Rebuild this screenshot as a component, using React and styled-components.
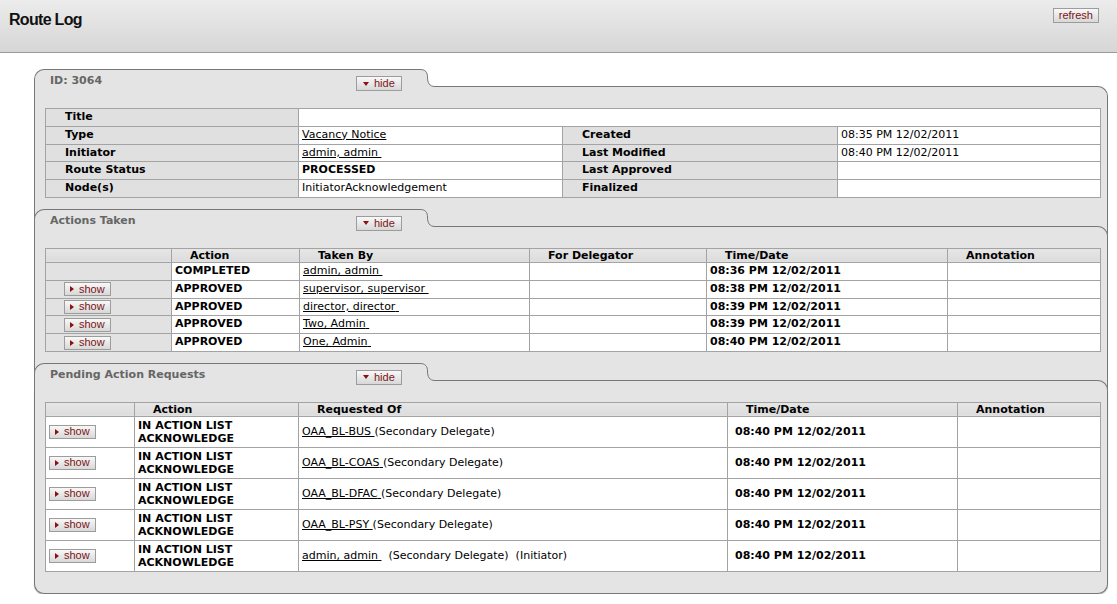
import styled, { createGlobalStyle } from 'styled-components';

const actionsTaken = [
  { action: 'COMPLETED', by: 'admin, admin', time: '08:36 PM 12/02/2011', show: false },
  { action: 'APPROVED', by: 'supervisor, supervisor', time: '08:38 PM 12/02/2011', show: true },
  { action: 'APPROVED', by: 'director, director', time: '08:39 PM 12/02/2011', show: true },
  { action: 'APPROVED', by: 'Two, Admin', time: '08:39 PM 12/02/2011', show: true },
  { action: 'APPROVED', by: 'One, Admin', time: '08:40 PM 12/02/2011', show: true },
];

const pending = [
  { of: 'OAA_BL-BUS' },
  { of: 'OAA_BL-COAS' },
  { of: 'OAA_BL-DFAC' },
  { of: 'OAA_BL-PSY' },
  { of: 'admin, admin', initiator: true },
];

export default function App() {
  return (
    <>
      <GlobalStyle />
      <Header>
        <PageTitle>Route Log</PageTitle>
        <Button type='button'>refresh</Button>
      </Header>

      <Panel>
        <Section>
          <SectionTab title='ID: 3064' />
          <SectionBody>
            <Table>
              <colgroup>
                <Col $w={253} />
                <Col $w={264} />
                <Col $w={275} />
                <Col $w={263} />
              </colgroup>
              <tbody>
                <tr>
                  <Label>Title</Label>
                  <Cell colSpan={3}></Cell>
                </tr>
                <tr>
                  <Label>Type</Label>
                  <Cell><Link>Vacancy Notice</Link></Cell>
                  <Label>Created</Label>
                  <Cell>08:35 PM 12/02/2011</Cell>
                </tr>
                <tr>
                  <Label>Initiator</Label>
                  <Cell><Link>admin, admin&nbsp;</Link></Cell>
                  <Label>Last Modified</Label>
                  <Cell>08:40 PM 12/02/2011</Cell>
                </tr>
                <tr>
                  <Label>Route Status</Label>
                  <Cell $bold>PROCESSED</Cell>
                  <Label>Last Approved</Label>
                  <Cell></Cell>
                </tr>
                <tr>
                  <Label>Node(s)</Label>
                  <Cell>InitiatorAcknowledgement</Cell>
                  <Label>Finalized</Label>
                  <Cell></Cell>
                </tr>
              </tbody>
            </Table>
          </SectionBody>
        </Section>

        <Section>
          <SectionTab title='Actions Taken' nested />
          <SectionBody>
            <Table>
              <colgroup>
                <Col $w={126} />
                <Col $w={128} />
                <Col $w={230} />
                <Col $w={177} />
                <Col $w={241} />
                <Col $w={153} />
              </colgroup>
              <thead>
                <tr>
                  <HeadCell></HeadCell>
                  <HeadCell>Action</HeadCell>
                  <HeadCell>Taken By</HeadCell>
                  <HeadCell>For Delegator</HeadCell>
                  <HeadCell>Time/Date</HeadCell>
                  <HeadCell>Annotation</HeadCell>
                </tr>
              </thead>
              <tbody>
                {actionsTaken.map((row, i) => (
                  <tr key={i}>
                    <ShowCell $grey>
                      {row.show && <Toggle dir='right'>show</Toggle>}
                    </ShowCell>
                    <Cell $bold>{row.action}</Cell>
                    <Cell><Link>{row.by}&nbsp;</Link></Cell>
                    <Cell></Cell>
                    <Cell $bold>{row.time}</Cell>
                    <Cell></Cell>
                  </tr>
                ))}
              </tbody>
            </Table>
          </SectionBody>
        </Section>

        <Section>
          <SectionTab title='Pending Action Requests' nested />
          <SectionBody $last>
            <Table $lh={13}>
              <colgroup>
                <Col $w={89} />
                <Col $w={164} />
                <Col $w={429} />
                <Col $w={230} />
                <Col $w={143} />
              </colgroup>
              <thead>
                <tr>
                  <HeadCell></HeadCell>
                  <HeadCell>Action</HeadCell>
                  <HeadCell>Requested Of</HeadCell>
                  <HeadCell>Time/Date</HeadCell>
                  <HeadCell>Annotation</HeadCell>
                </tr>
              </thead>
              <tbody>
                {pending.map((row, i) => (
                  <tr key={i}>
                    <ShowCell $tight>
                      <Toggle dir='right'>show</Toggle>
                    </ShowCell>
                    <Cell $bold>
                      IN ACTION LIST
                      <br />
                      ACKNOWLEDGE
                    </Cell>
                    <Cell>
                      <Link>{row.of}&nbsp;</Link>
                      {row.initiator ? '\u00a0\u00a0(Secondary Delegate)\u00a0\u00a0(Initiator)' : '(Secondary Delegate)'}
                    </Cell>
                    <Cell $bold $indent>08:40 PM 12/02/2011</Cell>
                    <Cell></Cell>
                  </tr>
                ))}
              </tbody>
            </Table>
          </SectionBody>
        </Section>
      </Panel>
    </>
  );
}

function SectionTab({ title, nested }) {
  return (
    <SectionHead $nested={nested}>
      <TabLeft>
        <TabTitle>{title}</TabTitle>
        <Toggle dir='down' tall>hide</Toggle>
      </TabLeft>
      <Step width='15' height='28' viewBox='0 0 15 28'>
        <path d='M0 0 C6 0 8 3 8 8 C8 14 9.5 17.5 15 17.5 L15 28 L0 28 Z' fill='#e4e4e4' />
        <path d='M0 0.5 C5.5 0.5 7.5 3.5 7.5 8 C7.5 14 9.5 17.5 15 17.5' fill='none' stroke='#777' />
      </Step>
      <TabRight />
    </SectionHead>
  );
}

function Toggle({ dir, tall, children }) {
  return (
    <Button type='button' $small $tall={tall}>
      <Arrow $dir={dir} />
      {children}
    </Button>
  );
}

const GlobalStyle = createGlobalStyle`
  body {
    margin: 0;
    background: #fff;
    color: #000;
    font-family: 'DejaVu Sans', Verdana, sans-serif;
    font-size: 11px;
  }
`;

const Header = styled.div`
  height: 53px;
  border-bottom: 1px solid #9a9a9a;
  background: linear-gradient(180deg, #ececec 0%, #e2e2e2 45%, #d6d6d6 100%);
  display: flex;
  justify-content: space-between;
  align-items: flex-start;
  padding: 8px 18px 0 9px;
  box-sizing: border-box;
`;

const PageTitle = styled.h1`
  margin: 2px 0 0;
  font-family: 'Liberation Sans', Arial, sans-serif;
  font-size: 16px;
  line-height: 20px;
  letter-spacing: -0.7px;
  font-weight: bold;
  color: #111;
`;

const Button = styled.button`
  display: inline-flex;
  align-items: center;
  gap: ${p => (p.$small ? '4px' : '0')};
  box-sizing: border-box;
  height: ${p => (p.$tall || !p.$small ? '15px' : '14px')};
  margin: ${p => (p.$tall ? '3px 0 0' : '0')};
  padding: 0 ${p => (p.$tall ? '6px' : '5px')};
  border: 1px solid #9c9c9c;
  border-radius: 0;
  background: linear-gradient(180deg, #f8f8f8 0%, #e6e6e6 55%, #d8d8d8 100%);
  color: #7a1515;
  font-family: 'Liberation Sans', Arial, sans-serif;
  font-size: 11px;
  line-height: 1;
  cursor: pointer;
  vertical-align: middle;
`;

const Arrow = styled.span`
  width: 0;
  height: 0;
  margin-right: 1px;
  ${p =>
    p.$dir === 'down'
      ? `border-left: 3.5px solid transparent;
         border-right: 3.5px solid transparent;
         border-top: 4px solid #8b1010;`
      : `border-top: 3.5px solid transparent;
         border-bottom: 3.5px solid transparent;
         border-left: 4px solid #8b1010;`}
`;

const Panel = styled.div`
  margin: 16px 9px 0 34px;
`;

const Section = styled.div`
  display: flex;
  flex-direction: column;
`;

const SectionHead = styled.div`
  display: flex;
  height: 28px;
  background: ${p => (p.$nested ? '#e4e4e4' : 'transparent')};
  box-shadow: ${p => (p.$nested ? 'inset 1px 0 #777, inset -1px 0 #777' : 'none')};
`;

const TabLeft = styled.div`
  flex: 0 0 386px;
  box-sizing: border-box;
  height: 28px;
  display: flex;
  align-items: flex-start;
  padding: 3px 0 0 15px;
  border-top: 1px solid #777;
  border-left: 1px solid #777;
  border-top-left-radius: 10px;
  background: #e4e4e4;
`;

const TabTitle = styled.div`
  flex: 0 0 306px;
  font-weight: bold;
  font-size: 11px;
  line-height: 15px;
  color: #666;
`;

const Step = styled.svg`
  flex: none;
  display: block;
`;

const TabRight = styled.div`
  flex: 1;
  box-sizing: border-box;
  height: 11px;
  margin-top: 17px;
  border-top: 1px solid #777;
  border-right: 1px solid #777;
  border-top-right-radius: 10px;
  background: #e4e4e4;
`;

const SectionBody = styled.div`
  background: #e4e4e4;
  border-left: 1px solid #777;
  border-right: 1px solid #777;
  padding: 11px 7px ${p => (p.$last ? '21px' : '11px')} 10px;
  ${p =>
    p.$last &&
    `border-bottom: 1px solid #777;
     border-radius: 0 0 10px 10px;
     box-shadow: 0 1px 1px rgba(0, 0, 0, 0.3);`}
`;

const Table = styled.table`
  width: 1055px;
  border-collapse: collapse;
  table-layout: fixed;
  background: #fff;
  line-height: ${p => p.$lh || 12.8}px;
`;

const Col = styled.col`
  width: ${p => p.$w}px;
`;

const Label = styled.th`
  border: 1px solid #a3a3a3;
  background: #e0e0e0;
  text-align: left;
  font-weight: bold;
  padding: 2px 3px 2px 19px;
  vertical-align: middle;
`;

const HeadCell = styled.th`
  border: 1px solid #a3a3a3;
  background: linear-gradient(180deg, #e6e6e6, #dcdcdc);
  text-align: left;
  font-weight: bold;
  padding: 0 3px 0 18px;
  line-height: 13px;
`;

const Cell = styled.td`
  border: 1px solid #a3a3a3;
  padding: 2px 3px 2px ${p => (p.$indent ? '7px' : '3px')};
  font-weight: ${p => (p.$bold ? 'bold' : 'normal')};
  vertical-align: middle;
  white-space: nowrap;
  overflow: hidden;
`;

const ShowCell = styled.td`
  border: 1px solid #a3a3a3;
  background: ${p => (p.$grey ? '#e2e2e2' : '#fff')};
  padding: 0 3px 0 ${p => (p.$tight ? '3px' : '18px')};
  vertical-align: middle;
  font-size: 0;
`;

const Link = styled.a`
  color: #000;
  text-decoration: underline;
  cursor: pointer;
`;
